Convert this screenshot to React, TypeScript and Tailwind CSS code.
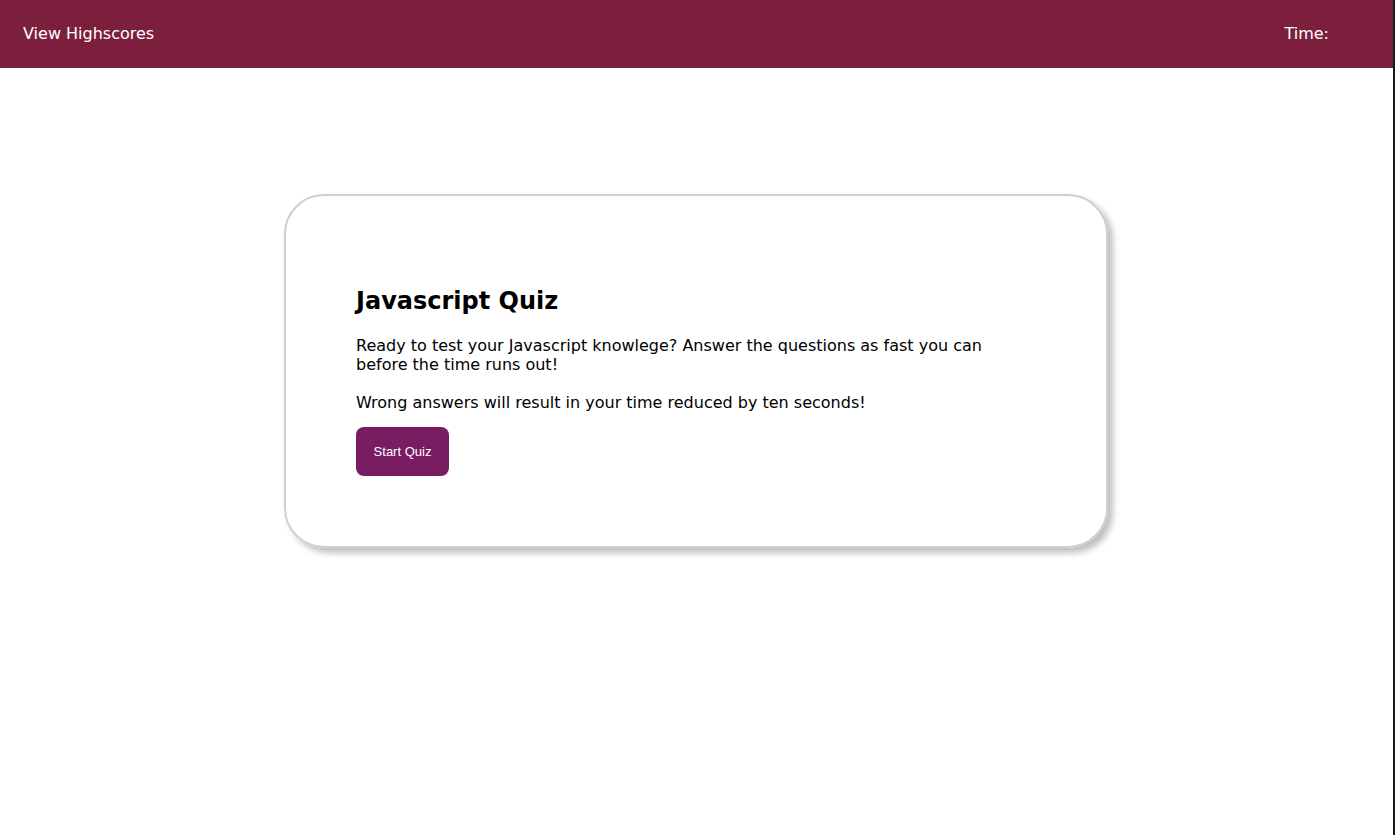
export default function App() {
    return (
        <div className="min-h-screen bg-white border-r-2 border-[#1a1a1a] font-['DejaVu_Sans',Verdana,sans-serif]">
            {/* top bar */}
            <header className="h-[68px] bg-[#7c1f3c] text-white flex items-center justify-between pl-[23px] pr-[64px] text-[16px]">
                <a className="cursor-pointer">View Highscores</a>
                <span>Time:</span>
            </header>

            {/* quiz card */}
            <main className="flex justify-center pt-[126px] pr-[1px]">
                <section className="w-[824px] h-[354px] border-2 border-[#cfcfcf] rounded-[40px] shadow-[5px_5px_6px_rgba(0,0,0,0.25)] pl-[70px] pr-[68px] pt-[91px] text-black">
                    <h1 className="text-[24px] font-bold leading-[28px]">Javascript Quiz</h1>
                    <p className="mt-[21px] text-[16px] leading-[19px]">
                        Ready to test your Javascript knowlege? Answer the questions as fast you can
                        <br />
                        before the time runs out!
                    </p>
                    <p className="mt-[19px] text-[16px] leading-[19px]">
                        Wrong answers will result in your time reduced by ten seconds!
                    </p>
                    <button className="mt-[15px] w-[93px] h-[49px] rounded-[8px] bg-[#7a1c62] text-white text-[13px] font-['Liberation_Sans',Arial,sans-serif]">
                        Start Quiz
                    </button>
                </section>
            </main>
        </div>
    );
}
